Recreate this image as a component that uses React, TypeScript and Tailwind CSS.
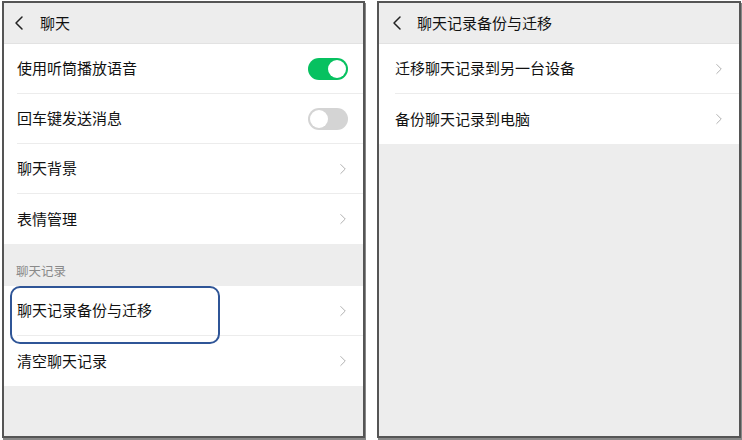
import { ChevronLeft, ChevronRight } from "lucide-react";

function Toggle({ on }: { on: boolean }) {
  return on ? (
    <div className="w-[40px] h-[22px] rounded-full bg-[#07c160] flex items-center justify-end px-[2px]">
      <div className="w-[18px] h-[18px] rounded-full bg-white" />
    </div>
  ) : (
    <div className="w-[40px] h-[22px] rounded-full bg-[#d4d4d4] flex items-center justify-start px-[2px]">
      <div className="w-[18px] h-[18px] rounded-full bg-white" />
    </div>
  );
}

function Row({ label, right, last, pl }: { label: string; right?: React.ReactNode; last?: boolean; pl: string }) {
  return (
    <div className={`${pl} bg-white`}>
      <div className={`h-[50px] flex items-center justify-between pr-[15px] ${last ? "" : "border-b border-[#ececec]"}`}>
        <span className="text-[15px] text-[#111]">{label}</span>
        {right ?? <ChevronRight size={18} strokeWidth={1.3} className="text-[#b0b0b0] -mr-[4px]" />}
      </div>
    </div>
  );
}

function Header({ title, pl, gap }: { title: string; pl: string; gap: string }) {
  return (
    <div className={`h-[41px] flex items-center ${pl} ${gap} bg-[#ededed] border-b border-[#e2e2e2]`}>
      <ChevronLeft size={24} strokeWidth={1.5} className="text-[#222]" />
      <span className="text-[15px] text-[#111]">{title}</span>
    </div>
  );
}

export default function App() {
  return (
    <div
      className="w-[742px] h-[440px] bg-white flex gap-[12px] pl-[2px] pt-[1px]"
      style={{ fontFamily: '"Noto Sans CJK SC", "Noto Sans", sans-serif' }}
    >
      {/* 左：聊天设置 */}
      <div className="w-[363px] h-[437px] border-2 border-[#555] shadow-[1px_2px_0_#888] bg-[#ededed] flex flex-col">
        <Header title="聊天" pl="pl-[3px]" gap="gap-[9px]" />
        <Row pl="pl-[13px]" label="使用听筒播放语音" right={<Toggle on />} />
        <Row pl="pl-[13px]" label="回车键发送消息" right={<Toggle on={false} />} />
        <Row pl="pl-[13px]" label="聊天背景" />
        <Row pl="pl-[13px]" label="表情管理" last />
        <div className="h-[42px] flex items-end pl-[12px] pb-[5px] text-[12.5px] text-[#8a8a8a]">聊天记录</div>
        <div className="relative">
          <Row pl="pl-[13px]" label="聊天记录备份与迁移" />
          <div className="absolute left-[6px] top-0 w-[210px] h-[58px] rounded-[10px] border-2 border-[#2f5597]" />
        </div>
        <Row pl="pl-[13px]" label="清空聊天记录" last />
      </div>

      {/* 右：备份与迁移 */}
      <div className="w-[364px] h-[437px] border-2 border-[#555] shadow-[1px_2px_0_#888] bg-[#ededed] flex flex-col">
        <Header title="聊天记录备份与迁移" pl="pl-[6px]" gap="gap-[8px]" />
        <Row pl="pl-[16px]" label="迁移聊天记录到另一台设备" />
        <Row pl="pl-[16px]" label="备份聊天记录到电脑" last />
      </div>
    </div>
  );
}
